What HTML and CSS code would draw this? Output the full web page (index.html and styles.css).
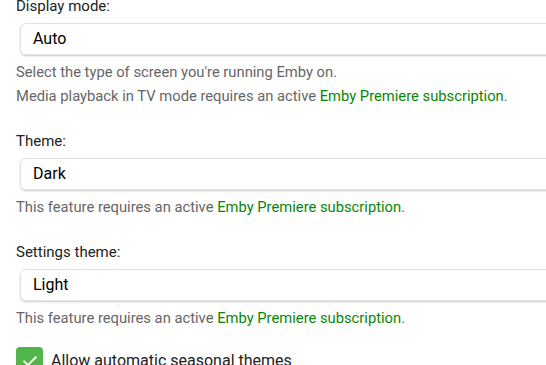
FILE: index.html
```html
<!DOCTYPE html>
<html lang="en">
<head>
  <meta charset="UTF-8">
  <meta name="viewport" content="width=device-width, initial-scale=1.0">
  <title>Display settings</title>
  <link rel="stylesheet" href="styles.css">
</head>
<body>

  <!-- Display Settings -->
  <section class="settings">
    <div class="field">
      <label class="field-label">Display mode:</label>
      <div class="select">Auto</div>
      <div class="field-help">
        <div>Select the type of screen you're running Emby on.</div>
        <div>Media playback in TV mode requires an active <a href="#">Emby Premiere subscription</a>.</div>
      </div>
    </div>

    <div class="field">
      <label class="field-label">Theme:</label>
      <div class="select">Dark</div>
      <div class="field-help">This feature requires an active <a href="#">Emby Premiere subscription</a>.</div>
    </div>

    <div class="field">
      <label class="field-label">Settings theme:</label>
      <div class="select">Light</div>
      <div class="field-help">This feature requires an active <a href="#">Emby Premiere subscription</a>.</div>
    </div>

    <label class="checkbox">
      <span class="checkbox-box">
        <svg viewBox="0 0 24 24" width="20" height="20"><path d="M5 12.5l4.5 4.5L19 7.5" fill="none" stroke="#fff" stroke-width="2.4" stroke-linecap="round" stroke-linejoin="round"/></svg>
      </span>
      <span class="checkbox-text">Allow automatic seasonal themes</span>
    </label>
  </section>

</body>
</html>
```

FILE: styles.css
```css
body {
  font-family: Roboto, 'Liberation Sans', sans-serif;
  background: #fff;
  margin: 0;
  padding: 0;
  color: #222;
  overflow: hidden;
}

/* Settings Section */
.settings {
  padding-left: 16px;
  margin-top: -4px;
}

.field {
  margin-bottom: 23px;
}

.field-label {
  display: block;
  font-size: 15px;
  line-height: 20px;
  margin-bottom: 7px;
}

.select {
  height: 32px;
  box-sizing: border-box;
  margin-left: 4px;
  margin-right: -40px;
  padding-left: 12px;
  border: 1px solid #e2e2e2;
  border-radius: 6px;
  box-shadow: 0 1px 2px rgba(0, 0, 0, 0.22);
  font-size: 16px;
  line-height: 30px;
  color: #000;
}

.field-help {
  margin-top: 5px;
  font-size: 14.75px;
  line-height: 24px;
  color: #666;
}

.field-help a {
  color: #078707;
  text-decoration: none;
}

/* Checkbox */
.checkbox {
  display: flex;
  align-items: center;
  gap: 8px;
  margin-top: -6px;
}

.checkbox-box {
  width: 27px;
  height: 27px;
  border-radius: 4px;
  background-color: #52b54b;
  display: flex;
  align-items: center;
  justify-content: center;
}

.checkbox-text {
  font-size: 16px;
  color: #222;
}
```
